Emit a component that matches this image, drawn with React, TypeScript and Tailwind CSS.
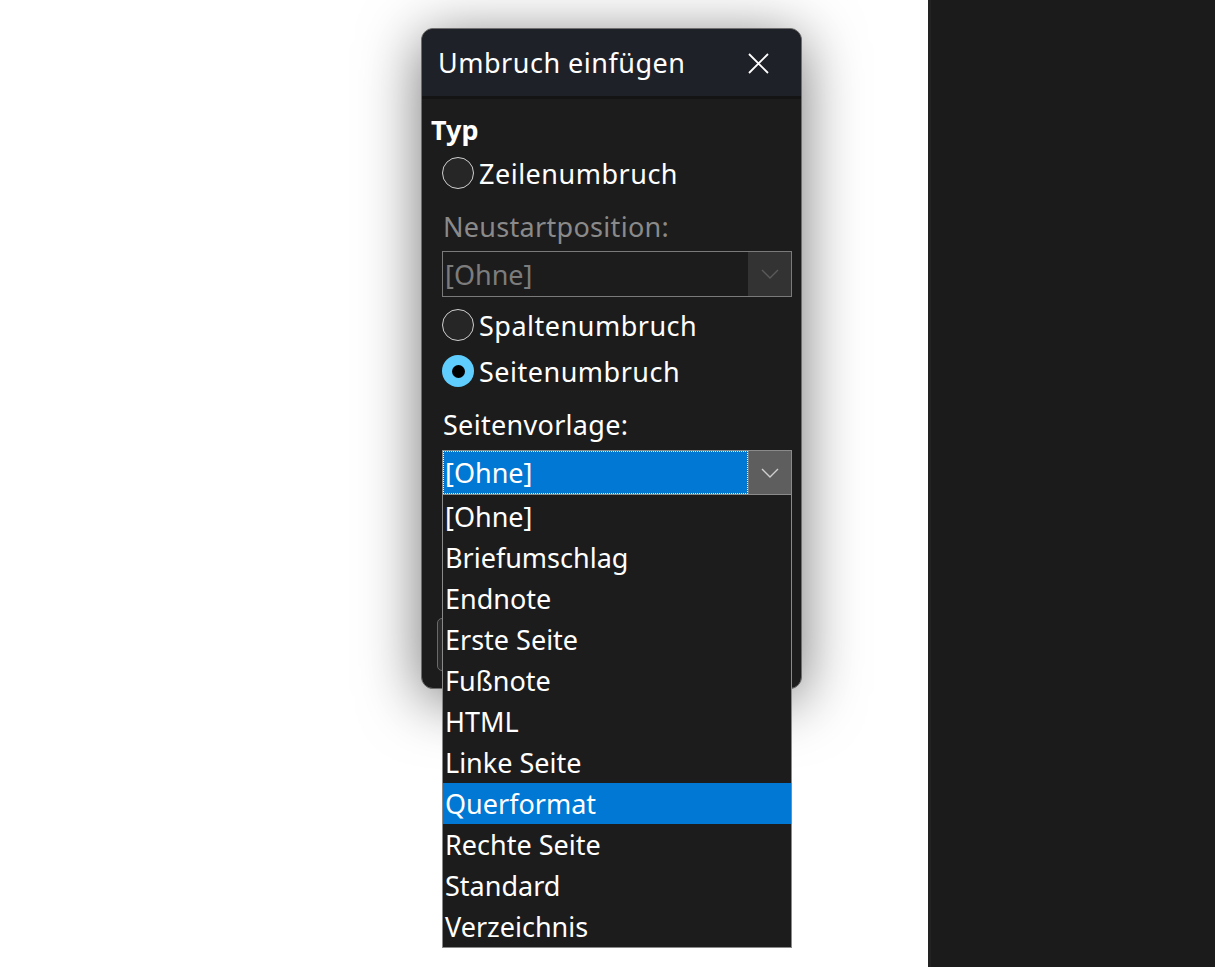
const options = [
  '[Ohne]',
  'Briefumschlag',
  'Endnote',
  'Erste Seite',
  'Fußnote',
  'HTML',
  'Linke Seite',
  'Querformat',
  'Rechte Seite',
  'Standard',
  'Verzeichnis',
];

const Chevron = ({ color }: { color: string }) => (
  <svg width="18" height="10" viewBox="0 0 18 10" fill="none">
    <path d="M1 1l8 8 8-8" stroke={color} strokeWidth="1.4" />
  </svg>
);

const Radio = ({ label, checked }: { label: string; checked?: boolean }) => (
  <div className="flex h-[44px] items-center pl-[11px]">
    {checked ? (
      <span className="flex h-[32px] w-[32px] items-center justify-center rounded-full bg-[#60cdff]">
        <span className="h-[13px] w-[13px] rounded-full bg-black" />
      </span>
    ) : (
      <span className="h-[32px] w-[32px] rounded-full border-[1.5px] border-[#cfcfcf] bg-[#262626]" />
    )}
    <span className="ml-[5px] tracking-[0.5px] text-white">{label}</span>
  </div>
);

export default function App() {
  return (
    <div
      className="flex h-[967px] w-[1215px] overflow-hidden bg-white text-[27px] leading-none"
      style={{ fontFamily: '"Noto Sans", "Open Sans", sans-serif' }}
    >
      <div className="w-[928px] shrink-0">
        <div className="relative ml-[421px] mt-[28px] flex h-[661px] w-[381px] flex-col rounded-[12px] border border-[#6e6e6e] bg-[#1c1c1c] shadow-[0_10px_60px_rgba(0,0,0,0.55)]">
          <div className="flex h-[70px] items-center justify-between rounded-t-[12px] border-b-[3px] border-[#141414] bg-[#1f2129] pl-[16px] pr-[32px]">
            <span className="tracking-[0.5px] text-white">Umbruch einfügen</span>
            <svg width="21" height="21" viewBox="0 0 21 21" fill="none" className="mt-[1px]">
              <path d="M1 1l19 19M20 1L1 20" stroke="white" strokeWidth="1.8" />
            </svg>
          </div>

          <div className="flex flex-col px-[9px] pt-[12px]">
            <div className="flex h-[36px] items-center font-bold text-white">Typ</div>
            <div className="mt-[4px]">
              <Radio label="Zeilenumbruch" />
            </div>
            <div className="mt-[11px] flex h-[40px] items-center pl-[12px] tracking-[0.3px] text-[#8a8a8a]">
              Neustartposition:
            </div>
            <div className="ml-[11px] mt-[5px] flex h-[46px] border border-[#7a7a7a] bg-[#1c1c1c]">
              <div className="flex flex-1 items-center pl-[2px] text-[#7c7c7c]">[Ohne]</div>
              <div className="flex w-[43px] items-center justify-center bg-[#333333]">
                <Chevron color="#5a5a5a" />
              </div>
            </div>
            <div className="mt-[6px]">
              <Radio label="Spaltenumbruch" />
            </div>
            <div className="mt-[2px]">
              <Radio label="Seitenumbruch" checked />
            </div>
            <div className="mt-[11px] flex h-[40px] items-center pl-[12px] tracking-[0.3px] text-white">
              Seitenvorlage:
            </div>

            <div className="relative ml-[11px] mt-[6px]">
              <div className="flex h-[45px] border border-[#8a8a8a] bg-[#1c1c1c]">
                <div className="flex flex-1 items-center border border-dotted border-white bg-[#0078d4] pl-[1px] text-white">
                  [Ohne]
                </div>
                <div className="flex w-[43px] items-center justify-center border-l border-[#7a7a7a] bg-[#5e5e5e]">
                  <Chevron color="#cfcfcf" />
                </div>
              </div>

              <ul className="absolute left-0 top-full z-10 w-full border border-t-0 border-[#8a8a8a] bg-[#1c1c1c] pt-[1px]">
                {options.map((o) => (
                  <li
                    key={o}
                    className={`flex h-[41px] items-center pl-[2px] text-white ${
                      o === 'Querformat' ? 'bg-[#0078d4] text-[#eaf6ff]' : ''
                    }`}
                  >
                    {o}
                  </li>
                ))}
              </ul>
            </div>

            <div className="mt-[123px] flex gap-[12px] pl-[6px]">
              <div className="h-[53px] w-[110px] rounded-[5px] border border-[#6a6a6a] bg-[#2b2b2b]" />
            </div>
          </div>
        </div>
      </div>
      <div className="flex-1 border-l-[3px] border-[#222222] bg-[#1b1b1b]" />
    </div>
  );
}
